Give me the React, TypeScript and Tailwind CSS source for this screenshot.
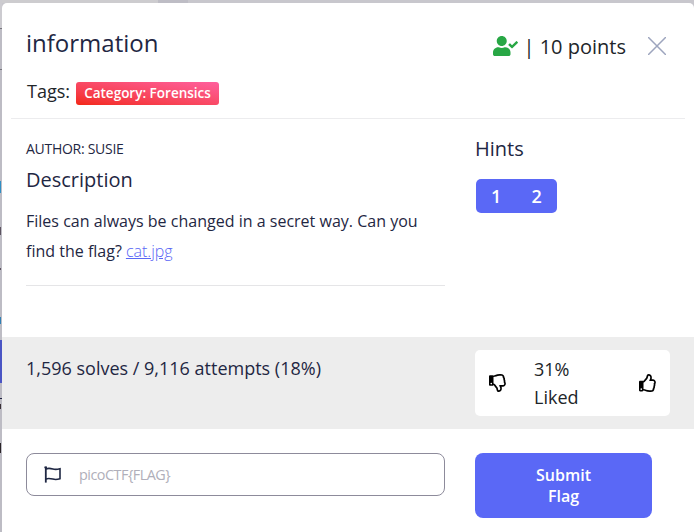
import React from "react";
import { FaUserCheck, FaRegThumbsUp, FaRegThumbsDown } from "react-icons/fa";

function PageEdge() {
  return (
    <div className="relative w-[2px] shrink-0 overflow-hidden bg-[#bdbcc4]">
      <div className="absolute left-0 top-0 h-[28px] w-[2px] bg-[#cccbd0]" />
      <div className="absolute left-0 top-[28px] h-px w-[2px] bg-[#77767e]" />
      <div className="absolute left-0 top-[69px] h-px w-[2px] bg-[#77767e]" />
      <div className="absolute left-0 top-[181px] h-[12px] w-px bg-[#2f8fc4]" />
      <div className="absolute left-0 top-[227px] h-[8px] w-px bg-[#5c5360]" />
      <div className="absolute left-0 top-[268px] h-[2px] w-px bg-[#5c5360]" />
      <div className="absolute left-0 top-[317px] h-[7px] w-px bg-[#2f7fb4]" />
      <div className="absolute left-0 top-[340px] h-[43px] w-[2px] bg-[#4a55c4]" />
      <div className="absolute left-0 top-[398px] h-px w-[2px] bg-[#1d2140]" />
      <div className="absolute left-0 top-[404px] h-[5px] w-px bg-[#3a3036]" />
      <div className="absolute left-0 top-[443px] h-[10px] w-px bg-[#2a2428]" />
    </div>
  );
}

function FlagIcon() {
  return (
    <svg viewBox="0 0 18 18" className="h-[18px] w-[18px]" fill="none" stroke="#1f2743" strokeWidth="1.6">
      <path d="M1.8 .6v16" strokeWidth="1.8" />
      <path d="M.4 1.400h2.500" />
      <path d="M1.800 2.900C4.500 2 6.200 2.200 8.800 3s4.500.5 7.200-.3v10c-2.700.9-4.600 1.100-7.200.4s-4.300-.9-7-.2" />
    </svg>
  );
}

export default function App() {
  return (
    <div className="flex h-[532px] w-[694px] flex-col overflow-hidden bg-[#c8c7cd] font-['Open_Sans',sans-serif] text-[#1f2743]">
      <div className="flex h-[3px] shrink-0">
        <div className="w-[158px] bg-[#cdcccf]" />
        <div className="w-[30px] bg-[#bebdc5]" />
        <div className="grow bg-[#c8c7cd]" />
      </div>
      <div className="flex grow">
        <div className="-mt-[3px] flex"><PageEdge /></div>
        <main className="flex grow flex-col rounded-t-[5px] bg-white">
          <header className="mx-[9px] flex h-[116px] flex-col border-b border-[#ececee] pl-[15px]">
            <div className="flex h-[75px] items-start">
              <h1 className="mt-[23px] grow text-[24px] leading-[34px]">information</h1>
              <div className="mt-[29px] flex items-start text-[20px] leading-[30px] text-[#212529]">
                <FaUserCheck className="mr-[6px] mt-[4px] h-5 w-[25px] text-[#28a745]" />
                <span>| 10 points</span>
              </div>
              <svg viewBox="0 0 18 18" className="ml-[22px] mr-[19px] mt-[34px] h-[18px] w-[18px]" stroke="#9da5be" strokeWidth="1.5">
                <path d="M0 0l18 18M18 0L0 18" />
              </svg>
            </div>
            <div className="flex items-start pl-px text-[18px] leading-[27px] text-[#212529]">
              <span>Tags:</span>
              <span className="ml-[6px] mt-[4px] h-[23px] w-[143px] rounded-[3px] bg-linear-to-tr from-[#f3260f] to-[#ff5f9d] text-center text-[13.500px] font-semibold leading-[23px] text-white">
                Category: Forensics
              </span>
            </div>
          </header>
          <section className="flex h-[218px] pl-6">
            <div className="h-[167px] w-[419px] border-b border-[#e5e5e7] pt-5">
              <p className="text-[14px] leading-[20px] tracking-[-0.28px]">AUTHOR: SUSIE</p>
              <h2 className="mt-[6px] text-[20px] leading-[30px]">Description</h2>
              <div className="mt-[11px] text-[16px] leading-[30px] tracking-[0.01px]">
                <p>Files can always be changed in a secret way. Can you</p>
                <p className="flex gap-1">
                  <span>find the flag?</span>
                  <a className="font-light text-[#5a67f5] underline">cat.jpg</a>
                </p>
              </div>
            </div>
            <div className="ml-[30px] pt-[15px]">
              <h2 className="text-[20px] leading-[30px]">Hints</h2>
              <div className="ml-px mt-[15px] flex h-[34px] w-[81px] items-center justify-around rounded-[5px] bg-[#5a68f6] text-[18px] font-semibold text-white">
                <span>1</span>
                <span>2</span>
              </div>
            </div>
          </section>
          <section className="flex h-[92px] bg-[#ededed] pl-6 pt-[13px] text-[18px]">
            <p className="w-[449px] pt-1 leading-[28px]">1,596 solves / 9,116 attempts (18%)</p>
            <div className="flex h-[66px] w-[195px] items-center rounded-[5px] bg-white pl-[14px] text-[#212529]">
              <FaRegThumbsDown className="h-[18px] w-[18px] text-black" />
              <p className="ml-[27px] mt-[-1px] w-[105px] leading-[28px]">31%<br />Liked</p>
              <FaRegThumbsUp className="h-[18px] w-[18px] text-black" />
            </div>
          </section>
          <footer className="flex items-start pl-6 pt-6">
            <div className="flex h-[43px] w-[419px] items-center rounded-[8px] border border-[#8d8b9b] pl-[17px]">
              <FlagIcon />
              <span className="ml-[17px] text-[14.400px] tracking-[-0.5px] text-[#b0afba]">picoCTF&#123;FLAG&#125;</span>
            </div>
            <button className="ml-[30px] h-[65px] w-[177px] rounded-[8px] bg-[#5a68f6] text-[16px] font-semibold leading-[21px] text-white">
              Submit<br />Flag
            </button>
          </footer>
        </main>
      </div>
    </div>
  );
}
